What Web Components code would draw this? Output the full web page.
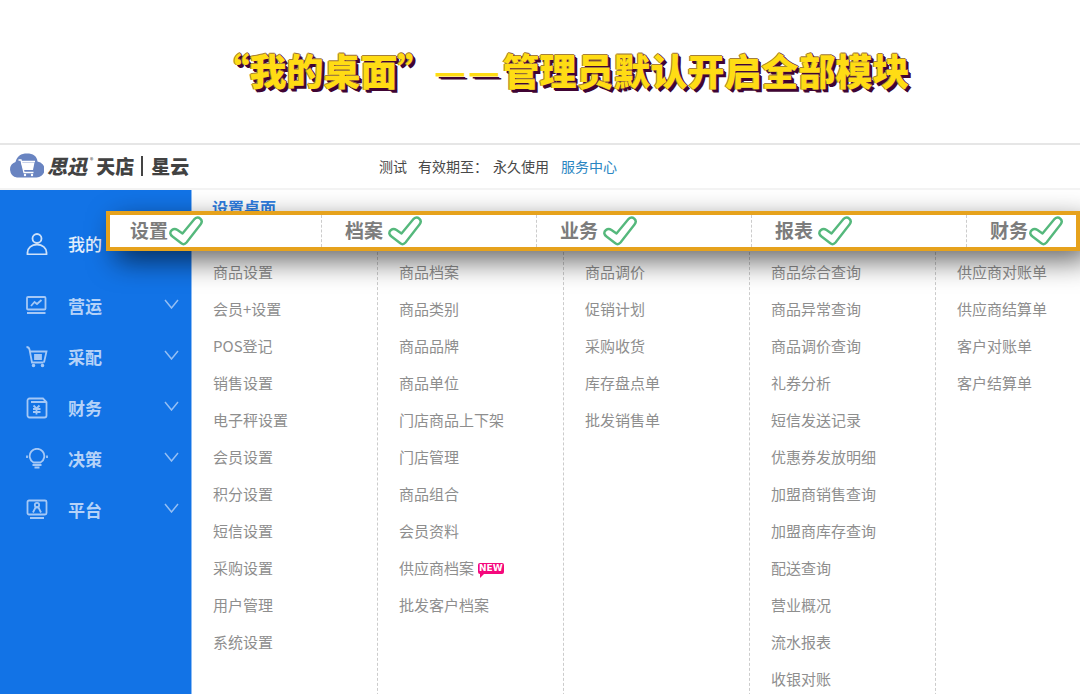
<!DOCTYPE html>
<html lang="zh-CN">
<head>
<meta charset="utf-8">
<title>我的桌面</title>
<style>
html,body{margin:0;height:100%}
body{font-family:"Noto Sans CJK SC",sans-serif;background:#fff;overflow:hidden}
</style>
</head>
<body>
<desk-page></desk-page>
<script>
const define = (name, html, setup) => {
  const t = document.createElement('template');
  t.innerHTML = html;
  customElements.define(name, class extends HTMLElement {
    connectedCallback() {
      if (this.shadowRoot) return;
      const root = this.attachShadow({ mode: 'open' });
      root.append(t.content.cloneNode(true));
      if (setup) setup(this, root);
    }
  });
};

const ICONS = {
  user: '<circle cx="11" cy="5.500" r="4.500"/><path d="M1.500 21.500V19.500C1.500 15 5.500 11.500 11 11.500S20.500 15 20.500 19.500V21.500Z"/>',
  chart: '<rect x="1" y="2" width="18.500" height="12.500" rx="1"/><path d="M5 11l3.500-4 2.500 2 4.500-4M1 18h18.500"/>',
  cart: '<path d="M.5 1c2 0 2.500.5 3 2.500L6 16.500h11.500M4 5.500h16.500L18 16.500M9 9h6v4H9zM9 11h6"/><circle cx="7.500" cy="19.500" r=".9"/><circle cx="16.500" cy="19.500" r=".9"/>',
  money: '<path d="M3.500 1.500h13.500l3.500 3.500v13.500a2 2 0 0 1-2 2h-15a2 2 0 0 1-2-2v-15a2 2 0 0 1 2-2zM5 5h15M7.500 8.500l3 3 3-3M7 12h7.500M7 15h7.500M10.500 11.500v6"/>',
  bulb: '<path d="M7.500 14.500a7.300 7.300 0 1 1 7 0zM6.500 17h9M8.500 19.500h5M1 7.500v2.500M21 7.500v2.500"/>',
  person: '<rect x="1.500" y="1.500" width="19" height="14" rx="1.500"/><circle cx="11" cy="6" r="2.200"/><path d="M7 13.500l2.500-5h3l2.500 5M4 19h14"/>'
};

define('page-title', `
<style>
:host{display:block;height:143px;text-align:center;padding-left:42px}
h1{margin:0;font-size:37px;line-height:140px;font-weight:900;color:#ffdc14;white-space:nowrap;
text-shadow:1px 0 #5a2340,-1px 0 #a5803c,0 -1px #a5803c,2px 2px #400433,3px 3px #400433}
::slotted(b){font-size:31px;margin-right:3px;-webkit-text-stroke:2px #ffdc14;text-shadow:2px 3px #400433,4px 4px #400433}
</style><h1><slot></slot></h1>`);

define('brand-logo', `
<style>
:host{display:flex;align-items:center;color:#424242;font-weight:900;font-size:19px;line-height:28px;white-space:nowrap}
svg{width:35px;height:27px;margin-right:3px}
.a{font-style:italic;font-size:20px}
sup{font-size:7px;font-weight:400;align-self:flex-start;line-height:16px;margin:0 3px}
.bar{width:2px;height:20px;background:#444;margin:0 8px 0 7px}
</style>
<svg viewBox="0 0 35 27"><path d="M8 25.500A8 8 0 0 1 6.500 10C8 4 12 1.500 18 1.500S28 4 28.500 9.500a8 8 0 0 1-2 16z" fill="#6984c1"/><path d="M12 10.500h13.500l-1.500 7.500H14.500z" fill="#fff"/><path d="M9.500 8h2.500l3 12.500h9.500M12 9.500h14" fill="none" stroke="#fff" stroke-width="1.300"/><circle cx="16" cy="23" r="1.200" fill="#fff"/><circle cx="23" cy="23" r="1.200" fill="#fff"/></svg>
<span class="a">思迅</span><sup>®</sup><span>天店</span><span class="bar"></span><span>星云</span>`);

define('top-bar', `
<style>
:host{display:flex;align-items:center;height:41px;padding-bottom:2px;border-top:2px solid #e6e6e6;border-bottom:2px solid #f3f3f3;background:#fff;position:relative;z-index:2}
brand-logo{margin-left:9px;width:370px}
p{margin:0;display:flex;font-size:14px;line-height:20px;color:#484848;white-space:nowrap}
span{margin-right:11px}.end{margin-right:5px}.use{margin-right:12px}
a{color:#2a86c2;text-decoration:none}
</style>
<brand-logo></brand-logo>
<p><span>测试</span><span class="end">有效期至：</span><span class="use">永久使用</span><a href="#service">服务中心</a></p>`);

define('nav-item', `
<style>
:host{display:block}
a{display:flex;align-items:center;height:51px;padding:0 12px 0 26px;color:#b5d2f8;font-size:17px;font-weight:700;text-decoration:none}
:host([current]) a{height:73px;color:#e3eefc;font-weight:500}
.i{width:22px;height:22px;margin-right:20px;opacity:.9;stroke-width:1.800}
.c{width:15px;height:10px;margin:0 0 4px auto;stroke-width:1.500;opacity:.8}
:host([current]) .c{display:none}
svg{fill:none;stroke:currentColor}
</style>
<a href="#"><svg class="i" viewBox="0 0 22 22"></svg><slot></slot><svg class="c" viewBox="0 0 15 10"><path d="M1 1l6.500 8L14 1"/></svg></a>`,
(el, root) => { root.querySelector('.i').innerHTML = ICONS[el.getAttribute('icon')]; });

define('side-nav', `
<style>
:host{display:block;width:192px;flex:none;box-sizing:border-box;padding-top:17px;background:#1273e6;border-right:1px solid #8dbcf4}
</style>
<nav><nav-item icon="user" current>我的</nav-item><nav-item icon="chart">营运</nav-item><nav-item icon="cart">采配</nav-item><nav-item icon="money">财务</nav-item><nav-item icon="bulb">决策</nav-item><nav-item icon="person">平台</nav-item></nav>`);

define('new-badge', `
<style>:host{display:inline-block;vertical-align:3px;margin-left:4px;background:#f5087c;color:#fff;font:700 9px/11px "DejaVu Sans",sans-serif;padding:0 1px;border-radius:2px;position:relative}
:host::after{content:"";position:absolute;left:2px;top:11px;border:2px solid transparent;border-top-color:#f5087c;border-left-color:#f5087c}</style><slot></slot>`);

define('link-column', `
<style>
:host{display:block;box-sizing:border-box;width:186px;flex:none;padding:21px 0 0 21px;border-right:1px dashed #ccc}
:host(:last-child){border:0}
ul{list-style:none;margin:0;padding:0}
li{height:37px;line-height:37px;font-size:15px;white-space:nowrap}
a{color:#8e8e8e;text-decoration:none}
</style><ul></ul>`,
(el, root) => {
  root.querySelector('ul').innerHTML = el.getAttribute('items').split(' ')
    .map(s => s.endsWith('*') ? `<li><a href="#">${s.slice(0, -1)}</a><new-badge>NEW</new-badge></li>` : `<li><a href="#">${s}</a></li>`).join('');
});

define('module-head', `
<style>
:host{display:flex;align-items:center;box-sizing:border-box;flex:0 0 215px;padding-left:23px;border-right:1px dashed #ccc;color:#7c7c7c;font-size:19px;line-height:28px;font-weight:700;white-space:nowrap}
:host(:first-of-type){flex-basis:212px;padding-left:20px}
:host(:last-child){border:0;flex:1 0 0}
span{margin-bottom:2px}
svg{width:34px;height:30px;margin-left:var(--gap,5px);flex:none}
</style>
<span><slot></slot></span><svg viewBox="0 0 34 30"><path d="M3 14C0 16.500 1.500 19 3.500 20.500L12 27Q15 29.500 17.500 26.500L31.500 8.500C35 4 29.500-.5 25.500 3L13.500 17.500 8.500 14Q5.500 12 3 14Z" fill="#fff" stroke="#55b87c" stroke-width="2.400" stroke-linejoin="round"/></svg>`);

define('module-bar', `
<style>
:host{display:flex;position:absolute;left:106px;right:0;top:21px;height:40px;box-sizing:border-box;border:4px solid #e6a21c;background:#fff;box-shadow:10px 10px 28px rgba(0,0,0,.6)}
.tight{--gap:1px}
</style>
<module-head class="tight">设置</module-head><module-head>档案</module-head><module-head>业务</module-head><module-head>报表</module-head><module-head class="tight">财务</module-head>`);

define('desk-page', `
<style>
:host{display:flex;flex-direction:column;height:100vh;overflow:hidden}
.body{display:flex;flex:1;min-height:0;position:relative}
main{flex:1;min-width:0;overflow:hidden}
h2{margin:0;padding:5px 0 0 20px;height:37px;font-size:16px;line-height:24px;color:#2e7de0;font-weight:700}
.cols{display:flex;min-height:100%}
</style>
<page-title>“我的桌面”<b>—</b><b>—</b>管理员默认开启全部模块</page-title>
<top-bar></top-bar>
<div class="body">
<side-nav></side-nav>
<main>
<h2>设置桌面</h2>
<div class="cols">
<link-column items="商品设置 会员+设置 POS登记 销售设置 电子秤设置 会员设置 积分设置 短信设置 采购设置 用户管理 系统设置"></link-column>
<link-column items="商品档案 商品类别 商品品牌 商品单位 门店商品上下架 门店管理 商品组合 会员资料 供应商档案* 批发客户档案"></link-column>
<link-column items="商品调价 促销计划 采购收货 库存盘点单 批发销售单"></link-column>
<link-column items="商品综合查询 商品异常查询 商品调价查询 礼券分析 短信发送记录 优惠券发放明细 加盟商销售查询 加盟商库存查询 配送查询 营业概况 流水报表 收银对账"></link-column>
<link-column items="供应商对账单 供应商结算单 客户对账单 客户结算单"></link-column>
</div>
</main>
<module-bar></module-bar>
</div>`);
</script>
</body>
</html>
